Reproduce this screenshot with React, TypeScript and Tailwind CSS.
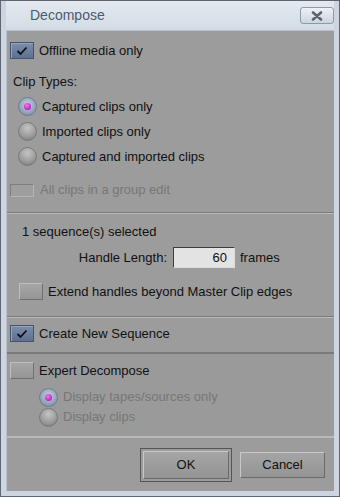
import React from 'react'

const font = { fontFamily: '"Liberation Sans", Arial, sans-serif' }

function CheckBox({ checked, small }: { checked?: boolean; small?: boolean }) {
  if (checked) {
    return (
      <div className="flex h-[17px] w-[24px] items-center justify-center border border-[#46546b] bg-gradient-to-b from-[#7c8eaa] to-[#5d7090] shadow-[inset_1px_1px_0_#93a4bd]">
        <svg width="12" height="10" viewBox="0 0 12 10">
          <path d="M1.5 5 L4.5 8 L10.5 1.5" fill="none" stroke="#0b0f18" strokeWidth="1.8" />
        </svg>
      </div>
    )
  }
  return (
    <div
      className={
        small
          ? 'h-[13px] w-[24px] border border-t-[#7e7e7e] border-l-[#7e7e7e] border-r-[#b4b4b4] border-b-[#b4b4b4] bg-[#9e9e9e]'
          : 'h-[17px] w-[24px] border border-t-[#bdbdbd] border-l-[#bdbdbd] border-r-[#707070] border-b-[#707070] bg-gradient-to-b from-[#a6a6a6] to-[#959595]'
      }
    />
  )
}

function Radio({ selected }: { selected?: boolean }) {
  return (
    <div
      className={
        selected
          ? 'flex h-[19px] w-[19px] items-center justify-center rounded-full border border-[#6b7d96] bg-[radial-gradient(circle_at_50%_40%,#c9d3e0,#8b9ab0_70%,#6d7d95)]'
          : 'h-[19px] w-[19px] rounded-full border border-[#7a7a7a] bg-[radial-gradient(circle_at_50%_30%,#c4c4c4,#9a9a9a_60%,#6f6f6f)]'
      }
    >
      {selected && <div className="h-[7px] w-[7px] rounded-full bg-[radial-gradient(circle_at_40%_35%,#f07af0,#a000b0)]" />}
    </div>
  )
}

function Separator() {
  return (
    <div>
      <div className="h-px bg-[#7d7d7d]" />
      <div className="h-px bg-[#b8b8b8]" />
    </div>
  )
}

export default function App() {
  return (
    <div className="h-[497px] w-[340px] bg-white" style={font}>
      <div className="flex h-full w-full flex-col border border-[#5f6670] bg-[#cdd6e0] px-[5px] pb-[5px]">
        {/* title bar */}
        <div className="flex h-[29px] shrink-0 items-center justify-between bg-gradient-to-b from-[#e4e9ef] to-[#d3dce6]">
          <span className="ml-[24px] text-[14px] text-[#4d5b6e]">Decompose</span>
          <div className="flex h-[17px] w-[34px] items-center justify-center rounded-[3px] border border-[#8f9aa8] bg-gradient-to-b from-[#eef1f5] to-[#cdd5de]">
            <svg width="12" height="10" viewBox="0 0 12 10">
              <path d="M2 1.5 L10 8.5 M10 1.5 L2 8.5" stroke="#5c636d" strokeWidth="2.6" strokeLinecap="round" />
            </svg>
          </div>
        </div>

        {/* client area */}
        <div className="flex flex-1 flex-col border-l border-t border-[#b8c2ce] bg-[#9c9c9c] text-[13px] leading-[16px] text-[#111]">
          <div className="mt-[11px] flex items-center gap-[5px] pl-[3px]">
            <CheckBox checked />
            <span>Offline media only</span>
          </div>

          <div className="mt-[15px] pl-[6px]">Clip Types:</div>

          <div className="mt-[4px] flex flex-col pl-[11px]">
            {[
              ['Captured clips only', true],
              ['Imported clips only', false],
              ['Captured and imported clips', false],
            ].map(([label, sel]) => (
              <div key={label as string} className="flex h-[25px] items-center gap-[5px]">
                <Radio selected={sel as boolean} />
                <span>{label}</span>
              </div>
            ))}
          </div>

          <div className="mt-[13px] flex items-center gap-[6px] pl-[3px]">
            <CheckBox small />
            <span className="text-[#777777]">All clips in a group edit</span>
          </div>

          <div className="mt-[14px]">
            <Separator />
          </div>

          <div className="mt-[10px] pl-[15px]">1 sequence(s) selected</div>

          <div className="mt-[7px] flex items-center">
            <span className="w-[166px] pr-[6px] text-right">Handle Length:</span>
            <div className="flex h-[21px] w-[62px] items-center justify-end border border-t-[#3d3d3d] border-l-[#3d3d3d] border-r-[#dcdcdc] border-b-[#dcdcdc] bg-[#e3e3e3] pr-[7px]">
              60
            </div>
            <span className="ml-[5px]">frames</span>
          </div>

          <div className="mt-[15px] flex items-center gap-[5px] pl-[12px]">
            <CheckBox />
            <span>Extend handles beyond Master Clip edges</span>
          </div>

          <div className="mt-[16px]">
            <Separator />
          </div>

          <div className="mt-[7px] flex items-center gap-[5px] pl-[3px]">
            <CheckBox checked />
            <span>Create New Sequence</span>
          </div>

          {/* expert group */}
          <div className="mt-[10px] flex h-[86px] flex-col border-t-2 border-b-2 border-t-[#7a7a7a] border-b-[#b9b9b9] bg-[#9a9a9a]">
            <div className="mt-[8px] flex items-center gap-[5px] pl-[3px]">
              <CheckBox />
              <span>Expert Decompose</span>
            </div>
            <div className="mt-[8px] flex flex-col pl-[32px] text-[#777777]">
              <div className="flex h-[20px] items-center gap-[5px]">
                <Radio selected />
                <span>Display tapes/sources only</span>
              </div>
              <div className="flex h-[20px] items-center gap-[5px]">
                <Radio />
                <span>Display clips</span>
              </div>
            </div>
          </div>

          <div className="mt-[10px] flex items-center justify-end gap-[8px] pr-[9px]">
            <div className="flex h-[34px] w-[92px] items-center justify-center border border-[#555] bg-[#9c9c9c] p-[2px]">
              <div className="flex h-full w-full items-center justify-center border border-t-[#c8c8c8] border-l-[#c8c8c8] border-r-[#6a6a6a] border-b-[#6a6a6a] bg-gradient-to-b from-[#a5a5a5] to-[#949494]">
                OK
              </div>
            </div>
            <div className="flex h-[26px] w-[85px] items-center justify-center border border-t-[#c8c8c8] border-l-[#c8c8c8] border-r-[#6a6a6a] border-b-[#6a6a6a] bg-gradient-to-b from-[#a5a5a5] to-[#949494]">
              Cancel
            </div>
          </div>
        </div>
      </div>
    </div>
  )
}
